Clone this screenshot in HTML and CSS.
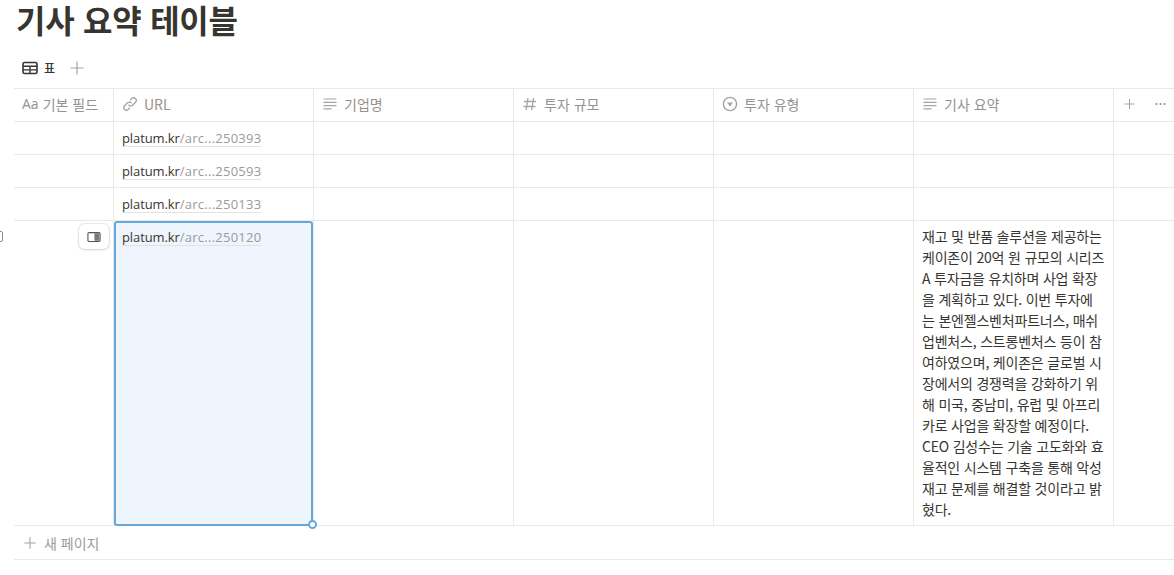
FILE: index.html
```html
<!DOCTYPE html>
<html lang="ko">
<head>
<meta charset="utf-8">
<title>기사 요약 테이블</title>
<link rel="stylesheet" href="styles.css">
</head>
<body>
<main class="page">
  <h1 class="title">기사 요약 테이블</h1>
  <div class="tabs">
    <div class="tab">
      <svg class="tab-icon" viewBox="0 0 16 16"><rect x="1" y="2.5" width="14" height="11" rx="1.5" fill="none" stroke="#37352f" stroke-width="1.6"/><path d="M1 6.3h14M1 9.9h14M8 6.3v7.2" stroke="#37352f" stroke-width="1.4" fill="none"/></svg>
      <span>표</span>
    </div>
    <svg class="tab-add" viewBox="0 0 14 14"><path d="M7 .5v13M.5 7h13" stroke="#a5a4a0" stroke-width="1.2" fill="none"/></svg>
  </div>
  <div class="table">
    <div class="row head">
      <div class="cell first"><span class="aa">Aa</span><span>기본 필드</span></div>
      <div class="cell">
        <svg class="ico" viewBox="0 0 16 16"><g fill="none" stroke="#a5a4a0" stroke-width="1.3" stroke-linecap="round"><path d="M6.8 9.2a2.6 2.6 0 0 0 3.7 0l3-3a2.6 2.6 0 0 0-3.7-3.7L8.6 3.7"/><path d="M9.2 6.8a2.6 2.6 0 0 0-3.7 0l-3 3a2.6 2.6 0 0 0 3.7 3.7l1.2-1.2"/></g></svg>
        <span>URL</span>
      </div>
      <div class="cell">
        <svg class="ico" viewBox="0 0 16 16"><path d="M1.5 3h13M1.5 6.3h13M1.5 9.6h13M1.5 12.9h8" stroke="#a5a4a0" stroke-width="1.2" fill="none"/></svg>
        <span>기업명</span>
      </div>
      <div class="cell">
        <svg class="ico" viewBox="0 0 16 16"><path d="M6 2 4.2 14M11.5 2 9.7 14M2 5.5h12M1.5 10.5h12" stroke="#a5a4a0" stroke-width="1.3" fill="none"/></svg>
        <span>투자 규모</span>
      </div>
      <div class="cell">
        <svg class="ico" viewBox="0 0 16 16"><circle cx="8" cy="8" r="6.6" fill="none" stroke="#a5a4a0" stroke-width="1.4"/><path d="M5 6.5h6L8 10.5z" fill="#a5a4a0"/></svg>
        <span>투자 유형</span>
      </div>
      <div class="cell">
        <svg class="ico" viewBox="0 0 16 16"><path d="M1.5 3h13M1.5 6.3h13M1.5 9.6h13M1.5 12.9h8" stroke="#a5a4a0" stroke-width="1.2" fill="none"/></svg>
        <span>기사 요약</span>
      </div>
      <div class="cell last">
        <svg class="tool" viewBox="0 0 12 12"><path d="M6 .5v11M.5 6h11" stroke="#a5a4a0" stroke-width="1.1" fill="none"/></svg>
        <svg class="tool" viewBox="0 0 12 12"><circle cx="1.6" cy="6" r="1.2" fill="#91908c"/><circle cx="6" cy="6" r="1.2" fill="#91908c"/><circle cx="10.4" cy="6" r="1.2" fill="#91908c"/></svg>
      </div>
    </div>
    <div class="row">
      <div class="cell first"></div>
      <div class="cell"><a class="url"><b>platum.kr</b>/arc...250393</a></div>
      <div class="cell"></div><div class="cell"></div><div class="cell"></div><div class="cell"></div><div class="cell last"></div>
    </div>
    <div class="row">
      <div class="cell first"></div>
      <div class="cell"><a class="url"><b>platum.kr</b>/arc...250593</a></div>
      <div class="cell"></div><div class="cell"></div><div class="cell"></div><div class="cell"></div><div class="cell last"></div>
    </div>
    <div class="row">
      <div class="cell first"></div>
      <div class="cell"><a class="url"><b>platum.kr</b>/arc...250133</a></div>
      <div class="cell"></div><div class="cell"></div><div class="cell"></div><div class="cell"></div><div class="cell last"></div>
    </div>
    <div class="row tall">
      <div class="cell first">
        <div class="check"></div>
        <div class="peek">
          <svg viewBox="0 0 16 12" class="peek-icon"><rect x=".7" y=".7" width="14.6" height="10.6" rx="1.5" fill="#fff" stroke="#55534e" stroke-width="1.3"/><rect x="8.5" y="1.5" width="6" height="9" fill="#7a7974"/></svg>
        </div>
      </div>
      <div class="cell selected-cell">
        <a class="url"><b>platum.kr</b>/arc...250120</a>
        <div class="selection"><span class="knob"></span></div>
      </div>
      <div class="cell"></div><div class="cell"></div><div class="cell"></div>
      <div class="cell summary"><p class="summary-text">재고 및 반품 솔루션을 제공하는<br>케이존이 20억 원 규모의 시리즈<br>A 투자금을 유치하며 사업 확장<br>을 계획하고 있다. 이번 투자에<br>는 본엔젤스벤처파트너스, 매쉬<br>업벤처스, 스트롱벤처스 등이 참<br>여하였으며, 케이존은 글로벌 시<br>장에서의 경쟁력을 강화하기 위<br>해 미국, 중남미, 유럽 및 아프리<br>카로 사업을 확장할 예정이다.<br>CEO 김성수는 기술 고도화와 효<br>율적인 시스템 구축을 통해 악성<br>재고 문제를 해결할 것이라고 밝<br>혔다.</p></div>
      <div class="cell last"></div>
    </div>
    <div class="new-page">
      <svg class="new-add" viewBox="0 0 12 12"><path d="M6 .3v11.4M.3 6h11.4" stroke="#a5a4a0" stroke-width="1.1" fill="none"/></svg>
      <span>새 페이지</span>
    </div>
  </div>
</main>
</body>
</html>
```
FILE: styles.css
```css
html, body {
  margin: 0;
  padding: 0;
  width: 1174px;
  height: 575px;
  overflow: hidden;
  background: #fff;
}
body {
  font-family: "Open Sans", "Noto Sans CJK KR", sans-serif;
  color: #37352f;
  font-size: 14px;
}
.page {
  padding-left: 14px;
}
.title {
  margin: 0;
  padding-left: 2px;
  height: 47px;
  font-size: 32px;
  line-height: 39px;
  letter-spacing: -.25px;
  font-weight: 700;
  font-family: "Noto Sans CJK KR", sans-serif;
}
.tabs {
  display: flex;
  align-items: center;
  height: 41px;
  padding-left: 8px;
  gap: 14px;
}
.tab {
  display: flex;
  align-items: center;
  gap: 6px;
  font-size: 12px;
  font-weight: 500;
  font-family: "Noto Sans CJK KR", sans-serif;
}
.tab-icon { width: 16px; height: 16px; }
.tab-add { width: 14px; height: 14px; margin-left: 1px; }
.table {
  width: 1160px;
  border-top: 1px solid #e9e9e7;
}
.row {
  display: grid;
  grid-template-columns: 100px repeat(5, 200px) 60px;
  height: 33px;
  box-sizing: border-box;
  border-bottom: 1px solid #e9e9e7;
}
.row.tall { height: 305px; }
.cell {
  display: flex;
  align-items: center;
  gap: 6px;
  padding: 0 8px;
  box-sizing: border-box;
  border-right: 1px solid #e9e9e7;
  position: relative;
  min-width: 0;
}
.cell.last { border-right: 0; gap: 20px; padding-left: 10px; }
.head .cell {
  color: #94938f;
  font-size: 14px;
  line-height: 30px;
  padding-bottom: 2px;
  font-family: "Noto Sans CJK KR", sans-serif;
  font-weight: 400;
  white-space: nowrap;
}
.head .first { gap: 4px; }
.aa {
  font-family: "Open Sans", sans-serif;
  font-size: 14px;
}
.ico { width: 16px; height: 16px; flex: none; }
.tool { width: 12px; height: 12px; }
.url {
  color: #9b9a97;
  font-size: 13px;
  line-height: 15px;
  letter-spacing: .25px;
  border-bottom: 1px solid #e3e2df;
  white-space: nowrap;
  position: relative;
  top: 1px;
}
.url b { color: #37352f; font-weight: 400; letter-spacing: -.1px; }
.tall .cell { align-items: flex-start; padding-top: 5px; }
.selected-cell { z-index: 1; }
.tall .selected-cell { padding-top: 8px; }
.selected-cell .url { z-index: 1; }
.selection {
  position: absolute;
  left: 0;
  top: 0;
  right: 0;
  bottom: -1px;
  box-sizing: border-box;
  background: #eef5fd;
  border: 2px solid #65a9dc;
  border-radius: 3px;
}
.knob {
  position: absolute;
  right: -6px;
  bottom: -5px;
  border-radius: 50%;
  border: 2px solid #65a9dc;
  background: #fff;
  box-sizing: content-box;
  width: 5px;
  height: 5px;
}
.check {
  position: absolute;
  left: -19px;
  top: 10px;
  width: 8px;
  height: 11px;
  box-sizing: border-box;
  border: 1px solid #8d8c88;
  border-radius: 2px;
  background: #fff;
}
.peek {
  position: absolute;
  left: 65px;
  top: 3px;
  width: 30px;
  height: 25px;
  box-sizing: border-box;
  display: flex;
  align-items: center;
  justify-content: center;
  background: #fff;
  border-radius: 6px;
  box-shadow: 0 0 0 1px rgba(15,15,15,.08), 0 1px 3px rgba(15,15,15,.12);
}
.peek-icon { width: 14px; height: 10px; }
.summary-text {
  margin: 0;
  font-size: 14px;
  line-height: 21px;
  white-space: nowrap;
  font-family: "Noto Sans CJK KR", sans-serif;
  letter-spacing: -.2px;
}
.new-page {
  display: flex;
  align-items: center;
  height: 34px;
  box-sizing: border-box;
  padding-left: 10px;
  gap: 8px;
  color: #9b9a97;
  font-size: 14px;
  font-family: "Noto Sans CJK KR", sans-serif;
  border-bottom: 1px solid #e9e9e7;
}
.new-add { width: 12px; height: 12px; }
```
